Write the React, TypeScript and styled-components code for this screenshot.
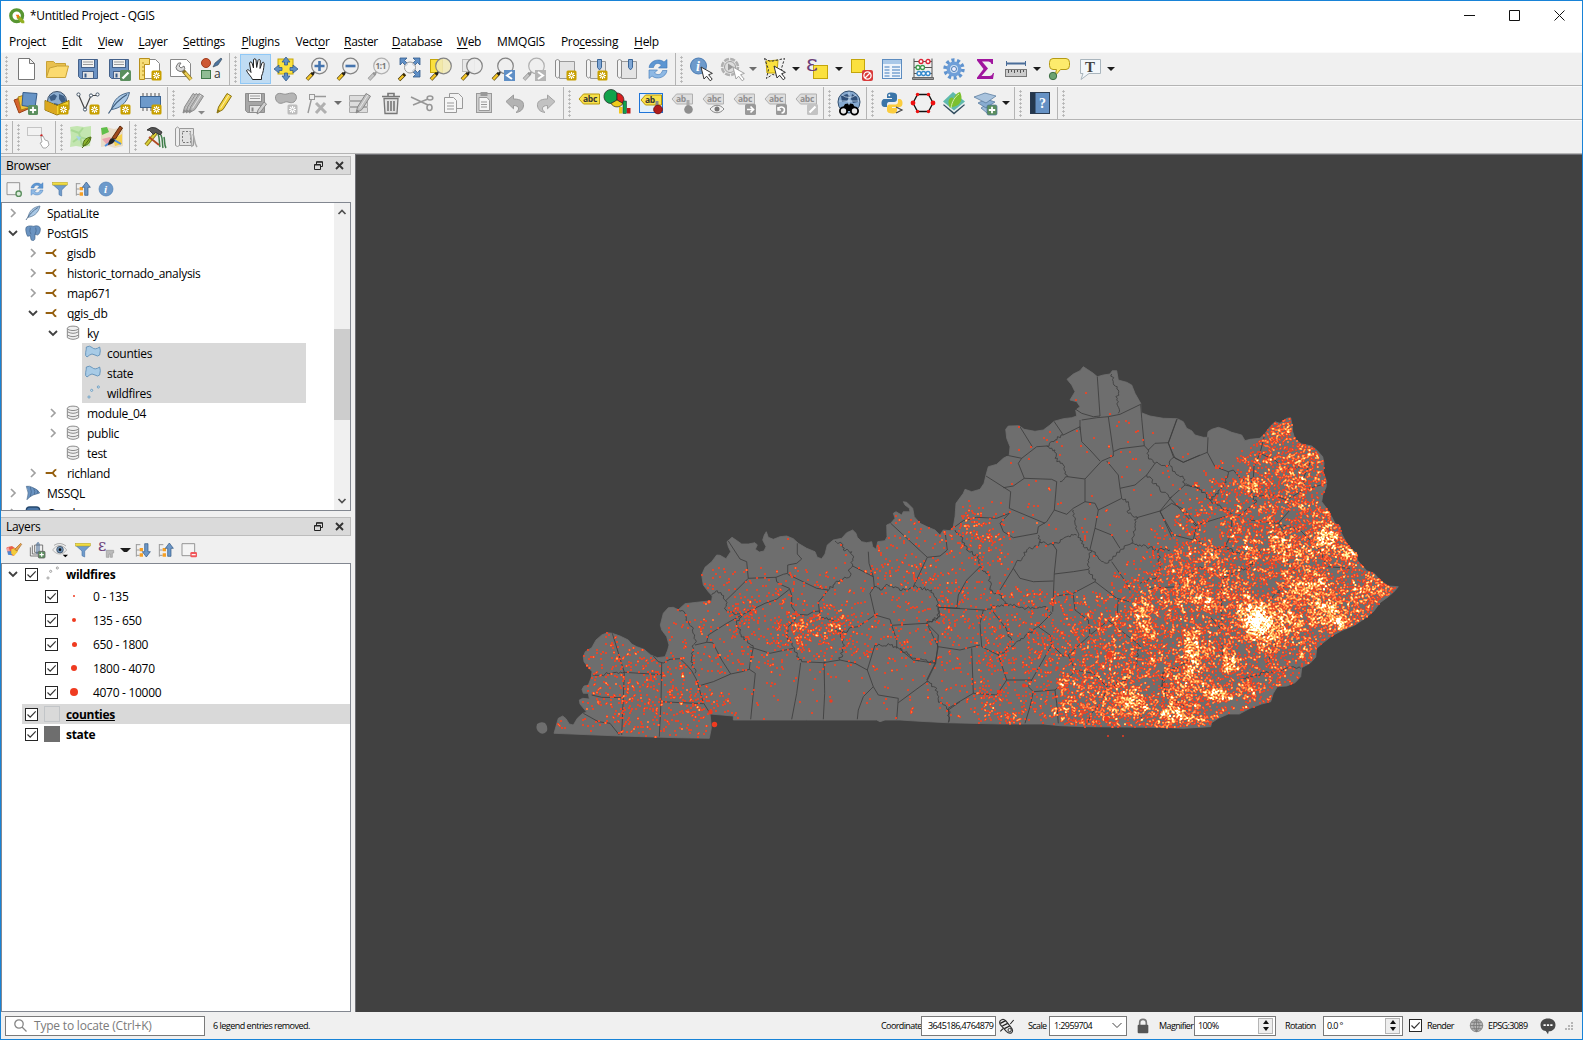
import React from "react";
import type { ReactNode } from "react";
import styled, { createGlobalStyle, css } from "styled-components";

const UI_FONT = '"Open Sans", "Noto Sans", sans-serif';

const GlobalStyle = createGlobalStyle`
  * { box-sizing: border-box; }
  html, body { margin: 0; padding: 0; overflow: hidden; }
  body { font: 12px ${UI_FONT}; color: #000; cursor: default; }
  svg { display: block; flex: none; }
`;

/* ------------------------------------------------------------------ shell */

const Window = styled.div`
  width: 1583px;
  height: 1040px;
  display: flex;
  flex-direction: column;
  background: #f0f0f0;
  border: 1px solid #1883d7;
  letter-spacing: -0.3px;
`;

const TitleBar = styled.header`
  height: 29px;
  flex: none;
  display: flex;
  align-items: center;
  background: #fff;
  padding-left: 8px;
`;

const TitleText = styled.h1`
  flex: 1;
  margin: 0 0 0 5px;
  font-size: 12px;
  font-weight: 400;
`;

const WindowButton = styled.div`
  width: 45px;
  height: 29px;
  display: flex;
  align-items: center;
  justify-content: center;
`;

const MenuBar = styled.nav`
  height: 22px;
  flex: none;
  display: flex;
  align-items: center;
  background: #fff;
`;

const MenuItem = styled.span<{ $w: number }>`
  width: ${(p) => p.$w}px;
  text-align: center;
  white-space: nowrap;
  u { text-underline-offset: 2px; }
`;

const ToolbarRow = styled.div`
  height: 34px;
  flex: none;
  display: flex;
  border-top: 1px solid #fafafa;
  border-bottom: 1px solid #b4b4b4;
`;

const ToolbarGroup = styled.div<{ $last?: boolean }>`
  display: flex;
  align-items: center;
  padding-right: 1px;
  border-right: ${(p) => (p.$last ? 0 : 1)}px solid #b4b4b4;
`;

const Handle = styled.div`
  width: 11px;
  height: 28px;
  flex: none;
  margin-right: -1px;
  background: radial-gradient(circle at 1.5px 1.5px, #b4b4b4 0.9px, transparent 1.4px) 4px 1px / 3px 4px repeat-y;
`;

const ToolButton = styled.div<{ $menu?: boolean; $active?: boolean }>`
  width: ${(p) => (p.$menu ? 43 : 31)}px;
  height: 30px;
  flex: none;
  display: flex;
  align-items: center;
  padding-left: 3px;
  gap: 5px;
  ${(p) =>
    p.$active &&
    css`
      background: #c0dcf3;
      border: 1px solid #90c8f6;
      padding-left: 3px;
    `}
`;

const Caret = styled.i<{ $dim?: boolean }>`
  border: 4px solid transparent;
  border-top-color: ${(p) => (p.$dim ? "#6d6d6d" : "#1c1c1c")};
  border-bottom: 0;
`;

const Workspace = styled.main`
  flex: 1;
  min-height: 0;
  display: flex;
`;

const Docks = styled.aside`
  width: 354px;
  flex: none;
  padding: 2px 4px 0 0;
  display: flex;
  flex-direction: column;
`;

const Dock = styled.section<{ $h?: number }>`
  ${(p) => (p.$h ? `height: ${p.$h}px; flex: none;` : "flex: 1; min-height: 0;")}
  display: flex;
  flex-direction: column;
`;

const DockTitle = styled.div`
  height: 19px;
  flex: none;
  display: flex;
  align-items: center;
  padding: 0 6px 0 5px;
  gap: 12px;
  background: #dadada;
  border: 1px solid #bcbcbc;
  border-left: 0;
  span { flex: 1; }
`;

const DockTools = styled.div`
  height: 27px;
  flex: none;
  display: flex;
  align-items: center;
  padding-left: 5px;
  gap: 7px;
`;

const TreeFrame = styled.div`
  flex: 1;
  min-height: 0;
  display: flex;
  background: #fff;
  border: 1px solid #828790;
`;

const TreeBody = styled.div`
  flex: 1;
  min-width: 0;
  overflow: hidden;
`;

const TreeRow = styled.div<{ $level: number }>`
  height: 20px;
  display: flex;
  align-items: center;
  padding-left: ${(p) => 1 + p.$level * 20}px;
`;

const Expander = styled.div`
  width: 19px;
  flex: none;
  display: flex;
  justify-content: center;
`;

const NodeCell = styled.div<{ $selected?: boolean }>`
  height: 20px;
  width: ${(p) => (p.$selected ? "224px" : "auto")};
  display: flex;
  align-items: center;
  gap: 6px;
  padding-left: 3px;
  white-space: nowrap;
  background: ${(p) => (p.$selected ? "#d9d9d9" : "none")};
`;

const ScrollBar = styled.div`
  width: 16px;
  flex: none;
  display: flex;
  flex-direction: column;
  align-items: center;
  background: #f0f0f0;
  padding: 5px 0;
`;

const ScrollThumb = styled.div`
  width: 16px;
  height: 91px;
  margin: 113px 0 auto;
  background: #cdcdcd;
`;

const LayerRow = styled.div<{ $h: number; $indent: number; $selected?: boolean; $bold?: boolean }>`
  height: ${(p) => p.$h}px;
  margin-left: ${(p) => (p.$indent ? 40 : 20)}px;
  padding-left: 3px;
  display: flex;
  align-items: center;
  background: ${(p) => (p.$selected ? "#d9d9d9" : "none")};
  font-weight: ${(p) => (p.$bold ? 700 : 400)};
  text-decoration: ${(p) => (p.$selected ? "underline" : "none")};
`;

const LayerRoot = styled.div`
  display: flex;
  align-items: center;
  padding-left: 1px;
  height: 20px;
  & > div:last-child { margin-left: 0; flex: 1; }
`;

const CheckBox = styled.div`
  width: 13px;
  height: 13px;
  flex: none;
  border: 1px solid #262626;
  background: #fff;
  display: flex;
  align-items: center;
  justify-content: center;
`;

const Swatch = styled.div<{ $fill: string; $line: string }>`
  width: 16px;
  height: 16px;
  margin: 0 6px;
  background: ${(p) => p.$fill};
  border: 1px solid ${(p) => p.$line};
`;

const SymbolCell = styled.div<{ $w: number; $gap?: number }>`
  width: ${(p) => p.$w}px;
  margin-right: ${(p) => p.$gap ?? 0}px;
  display: flex;
  justify-content: center;
`;

const Dot = styled.i<{ $d: number }>`
  width: ${(p) => p.$d}px;
  height: ${(p) => p.$d}px;
  border-radius: 50%;
  background: #ef3b20;
`;

const MapFrame = styled.section`
  flex: 1;
  background: #414141;
  border-left: 1px solid #6f6f74;
  border-top: 1px solid #6f6f74;
  overflow: hidden;
`;

const StatusBar = styled.footer`
  height: 27px;
  flex: none;
  display: flex;
  align-items: center;
  padding: 0 2px 0 4px;
  font-size: 9px;
  letter-spacing: -0.6px;
  white-space: nowrap;
`;

const Field = styled.div<{ $w: number; $pad?: number }>`
  width: ${(p) => p.$w}px;
  height: 20px;
  flex: none;
  display: flex;
  align-items: center;
  padding: 0 2px 0 ${(p) => p.$pad ?? 3}px;
  background: #fff;
  border: 1px solid #7a7a7a;
  span { flex: 1; }
`;

const Locator = styled(Field)`
  font-size: 12px;
  letter-spacing: -0.2px;
  color: #7b7b7b;
  gap: 7px;
`;

const Message = styled.div`
  flex: 1;
  padding-left: 8px;
  letter-spacing: -0.5px;
`;

const Label = styled.label<{ $w: number }>`
  width: ${(p) => p.$w}px;
  flex: none;
`;

const Spin = styled.div`
  width: 15px;
  height: 16px;
  display: flex;
  flex-direction: column;
  align-items: center;
  justify-content: space-around;
  background: #eee;
  border: 1px solid #b5b5b5;
  i { border: 3px solid transparent; }
  i:first-child { border-bottom: 4px solid #111; border-top: 0; }
  i:last-child { border-top: 4px solid #111; border-bottom: 0; }
`;

const StatusIcon = styled.div<{ $w: number }>`
  width: ${(p) => p.$w}px;
  flex: none;
  display: flex;
  justify-content: center;
`;

/* ------------------------------------------------------------------ icons */

const IconSvg = styled.svg`
  overflow: visible;
`;

const Icon = ({ size = 24, box = 24, children }: { size?: number; box?: number; children: ReactNode }) => (
  <IconSvg width={size} height={size} viewBox={`0 0 ${box} ${box}`} fill="none">
    {children}
  </IconSvg>
);

const GoldBadge = ({ x = 13, y = 13, dim = false }) => (
  <g transform={`translate(${x} ${y})`}>
    <rect x=".5" y=".5" width="10" height="10" rx="1.5" fill={dim ? "#bdbdbd" : "#c8a000"} />
    <path d="M5.5 2v7M2 5.5h7M3 3l5 5M8 3l-5 5" stroke="#fff" strokeWidth="1.1" />
    <circle cx="5.5" cy="5.5" r="1.1" fill={dim ? "#bdbdbd" : "#c8a000"} />
  </g>
);

const GreenBadge = ({ x = 14, y = 14 }) => (
  <g transform={`translate(${x} ${y})`}>
    <rect width="10" height="10" rx="1.5" fill="#5b8f5e" />
    <path d="M5 1.8v6.4M1.8 5h6.4" stroke="#fff" strokeWidth="1.8" />
  </g>
);

const Lens = ({ cx = 14.5, cy = 9, dim = false, fill = "#eee" }) => (
  <g>
    <path d="M2 22.5l6-6.2" stroke={dim ? "#8c8c8c" : "#3b2c00"} strokeWidth="3.6" />
    <path d="M2.2 22.3l4.4-4.6" stroke={dim ? "#c4c4c4" : "#f5c628"} strokeWidth="2.4" />
    <path d="M7 17.5l2.6-2.8" stroke={dim ? "#999" : "#222"} strokeWidth="2.2" />
    <circle cx={cx} cy={cy} r="7.8" fill={fill} fillOpacity=".88" stroke={dim ? "#b0b0b0" : "#848484"} strokeWidth="1.2" />
  </g>
);

const Cursor = ({ x = 12, y = 10, dim = false }) => (
  <path
    transform={`translate(${x} ${y})`}
    d="M0 0l3 12 2.6-2.8 3.6 4.6 2-1.6-3.6-4.5 3.8-1.3z"
    fill="#fff"
    stroke={dim ? "#a4a4a4" : "#333"}
    strokeWidth="1"
  />
);

const Disk = ({ dim = false }) => (
  <g stroke={dim ? "#8e8e8e" : "#44618a"}>
    <path d="M2.5 2.5h19v19h-17l-2-2z" fill={dim ? "#a6a6a6" : "#6d93c4"} />
    <rect x="5.5" y="2.5" width="13" height="8" fill="#f2f2f2" />
    <path d="M7 5h10M7 7.5h10" stroke="#999" />
    <rect x="6.5" y="14.5" width="11" height="7" fill="#e4e4e4" />
    <path d="M8.5 16.5h2v4h-2z" fill={dim ? "#888" : "#345b8c"} stroke="none" />
  </g>
);

const Tag = ({ dim = false, text = "abc", y = 0 }) => (
  <g transform={`translate(0 ${y})`}>
    <path d="M2 8l4.5-5h16v10h-16z" fill={dim ? "#dedede" : "#f8e14b"} stroke={dim ? "#b0b0b0" : "#b8990a"} />
    <text x="6" y="11" fontFamily="Open Sans, sans-serif" fontSize="8.5" fontWeight="700" letterSpacing="-.3" fill={dim ? "#8f8f8f" : "#333"}>
      {text}
    </text>
  </g>
);

const Pencil = ({ a = "#f2d13a", b = "#8a7415", dx = 0 }) => (
  <g transform={`translate(${dx} 0)`}>
    <path d="M5 22l1.5-6L15 2.5l4.5 2.7L11 18.5z" fill={a} stroke={b} />
    <path d="M8.5 17.3L16.8 4" stroke="#fff" strokeOpacity=".6" />
    <path d="M5 22l.9-3.6 2.2 1.4z" fill={b} />
  </g>
);

const Sheet = ({ dim = false }) => (
  <g>
    <path d="M6.5 4.5h15v17h-15z" fill="#e4e4e4" stroke="#9a9a9a" />
    <path d="M2.5 3.5q2-2 4 0v16q-2 3-4 0z" fill="#f4f4f4" stroke={dim ? "#aaa" : "#8b8b8b"} />
  </g>
);

const Bookmark = ({ x = 13 }) => <path transform={`translate(${x} 2)`} d="M.5.5h4v8l-2 2.4-2-2.4z" fill="#7fa6d4" stroke="#3c6797" />;

const Refresh = () => (
  <g>
    <path d="M3 10.5C4 3.5 13 .8 18 5l3-2.500v8.500h-8.500L15.500 8C12 5 8.500 6.500 7.500 10.500z" fill="#5d96d2" stroke="#3c76b5" strokeWidth=".6" />
    <path d="M21 13.500C20 20.500 11 23.200 6 19l-3 2.500V13h8.500L8.500 16c3.500 3 7 1.500 8-2.500z" fill="#8fb9e4" stroke="#3c76b5" strokeWidth=".6" />
  </g>
);

const Globe = () => (
  <g>
    <circle cx="12" cy="10" r="9.500" fill="#8cadcf" stroke="#3d5068" />
    <path d="M4 6l5-3 3 2-2 4-4 1zM14 3l5 2 2 5-4 2-3-4zM9 12l4 1-1 4-3-1z" fill="#3e5f86" />
  </g>
);

const Feather = () => (
  <g>
    <path d="M22.500 1.500C13 3 6.500 8 4.500 18.500 12 17.500 20 13 22.500 1.500z" fill="#a9c8e6" stroke="#4b6b8c" />
    <path d="M1.500 22.500C6 15 12 8 20 3.500" stroke="#3f5d7c" strokeWidth="1.200" />
  </g>
);

const Funnel = () => (
  <g>
    <path d="M1.500 5.500h21l-8 8v9l-4-2v-7z" fill="#6f9ccc" stroke="#4b76a8" />
    <rect x="1" y="2" width="22" height="4" fill="#f0dc44" stroke="#b8a520" strokeWidth=".8" />
  </g>
);

const TreeArrow = ({ down = false }) => (
  <g>
    <path d="M2 3v19M2 4h6M2 12h5M2 20h5" stroke="#999" strokeWidth="1.500" />
    <path d="M7 9h5v5H7zM7 17h5v5H7z" fill="#f7a024" />
    <path
      transform={down ? "matrix(1 0 0 -1 0 24)" : undefined}
      d="M17 1.500l6 8h-3.500v12h-5v-12H11z"
      fill="#6c97c8"
      stroke="#2e5580"
    />
  </g>
);

const MaskPage = (
  <path d="M1.500 2.500h19v18h-19z" stroke="#888" strokeWidth="1.300" fill="#f4f4f4" />
);

const icons: Record<string, ReactNode> = {
  newFile: <path d="M4.500 1.500h11l5 5v16h-16zM15.500 1.500v5h5" fill="#fff" stroke="#777" />,
  open: (
    <g stroke="#c8a237">
      <path d="M1.500 20V4.500h7l2 2h10V10" fill="#e9c04e" />
      <path d="M1.500 20.500l3-9.500 8-2h11l-3 11.500z" fill="#fbda6f" />
    </g>
  ),
  save: <Disk />,
  saveAs: (
    <g>
      <Disk />
      <rect x="13" y="13" width="11" height="11" rx="1.500" fill="#5b8f5e" />
      <path d="M15.500 21.500l6-6" stroke="#fff" strokeWidth="2.400" />
    </g>
  ),
  layout: (
    <g>
      <path d="M6.500 2.500h11l4 4v15h-15z" fill="#fff" stroke="#888" />
      <path d="M1.500 1.500h10v6h-5v15h-5z" fill="#f6dd78" stroke="#b8901c" />
      <path d="M4 6h2M4 10h2M4 14h2M4 18h2" stroke="#b8901c" />
      <GoldBadge />
    </g>
  ),
  layoutManager: (
    <g>
      <path d="M1.500 2.500h16l4 4v13h-20z" fill="#fff" stroke="#888" />
      <path d="M22 22.500l-8-9" stroke="#8c7420" strokeWidth="4" />
      <path d="M22 22.500l-6-7" stroke="#efd155" strokeWidth="2.400" />
      <path d="M8 8q1-3 4-2l-2 3 2 2 3-2q2 3-1 5l-3 .5q-4-1-4-4z" fill="#ddd" stroke="#777" />
    </g>
  ),
  style: (
    <g>
      <circle cx="6" cy="6" r="4.500" fill="#ce5833" stroke="#a03c1c" />
      <path d="M13 10l2-4 6-5 1 1-4 6z" fill="#4d759f" stroke="#345" strokeWidth=".6" />
      <rect x="1.500" y="13.500" width="9" height="8" fill="#8fbc94" stroke="#3f7a4a" />
      <text x="14" y="21" fontFamily="Open Sans, sans-serif" fontSize="12" fill="#333">a</text>
    </g>
  ),
  pan: (
    <path
      d="M8.500 22.500c-1-3-5-6-6-9 1-1.500 3-.5 4.500 2L5.500 6c.5-1.500 2-1.500 2.500 0l1.500 5L9.500 3c.3-1.700 2.200-1.700 2.500 0l.7 7.500L14 3.500c.5-1.500 2.200-1.200 2.300.3L16 11.500l2-5.500c.8-1.300 2.300-.7 2.200.7-.5 5-1 9-2.700 12.500v3.300z"
      fill="#fff"
      stroke="#222"
    />
  ),
  panSelection: (
    <g>
      <rect x="4" y="2" width="15" height="15" fill="#fbe13e" stroke="#c4a60b" />
      <path
        d="M12 0l4 5h-2.500v3h-3V5H8zM12 24l-4-5h2.500v-3h3v3H16zM0 12l5-4v2.500h3v3H5V16zM24 12l-5 4v-2.500h-3v-3h3V8z"
        fill="#5f8fc6"
        stroke="#345c8b"
        strokeWidth=".8"
      />
    </g>
  ),
  zoomIn: (
    <g>
      <Lens />
      <path d="M14.500 4v10M9.500 9h10" stroke="#4474ae" strokeWidth="2.600" />
    </g>
  ),
  zoomOut: (
    <g>
      <Lens />
      <path d="M9.500 9h10" stroke="#4474ae" strokeWidth="2.600" />
    </g>
  ),
  zoomNative: (
    <g>
      <Lens dim />
      <text x="8.500" y="12" fontFamily="Open Sans, sans-serif" fontSize="8" fontWeight="700" fill="#777">1:1</text>
    </g>
  ),
  zoomFull: (
    <g>
      <path d="M2 1h7L6.500 3.500 10 7 8 9 4.500 5.500 2 8zM22 1v7l-2.500-2.500L16 9l-2-2 3.500-3.500L15 1zM22 20h-7l2.500-2.500L14 14l2-2 3.500 3.500L22 13z" fill="#5f8fc6" stroke="#345c8b" strokeWidth=".8" />
      <path d="M1 23l6-6" stroke="#3b2c00" strokeWidth="3.400" />
      <path d="M1.300 22.700l4-4" stroke="#f5c628" strokeWidth="2.200" />
      <circle cx="12" cy="10.500" r="5.500" fill="#f4f4f4" fillOpacity=".8" stroke="#999" />
    </g>
  ),
  zoomSelection: (
    <g>
      <rect x="1.500" y="2.500" width="12" height="13" fill="#fbe13e" stroke="#c4a60b" />
      <Lens fill="#f0e9b8" />
    </g>
  ),
  zoomLayer: (
    <g>
      <rect x="2.500" y="2.500" width="12" height="12" fill="#e8e8e8" stroke="#bbb" />
      <Lens />
    </g>
  ),
  zoomLast: (
    <g>
      <Lens />
      <rect x="13" y="13" width="11" height="11" fill="#5f8fc6" />
      <path d="M21 15l-5 3.500 5 3.500" stroke="#fff" strokeWidth="2" />
    </g>
  ),
  zoomNext: (
    <g>
      <Lens dim />
      <rect x="13" y="13" width="11" height="11" fill="#b5b5b5" />
      <path d="M16 15l5 3.500-5 3.500" stroke="#fff" strokeWidth="2" />
    </g>
  ),
  newView: (
    <g>
      <Sheet />
      <GoldBadge />
    </g>
  ),
  newBookmark: (
    <g>
      <Sheet />
      <Bookmark />
      <GoldBadge />
    </g>
  ),
  bookmarks: (
    <g>
      <Sheet />
      <Bookmark />
    </g>
  ),
  refresh: <Refresh />,
  identify: (
    <g>
      <circle cx="9.500" cy="9" r="8" fill="#6d9acb" stroke="#4c7db5" />
      <text x="7" y="14" fontFamily="Liberation Serif, serif" fontStyle="italic" fontSize="14" fontWeight="700" fill="#fff">i</text>
      <Cursor />
    </g>
  ),
  action: (
    <g>
      <circle cx="10" cy="10" r="8" fill="#e6e6e6" stroke="#b0b0b0" strokeWidth="2.600" strokeDasharray="5 1.280" />
      <circle cx="10" cy="10" r="5.500" fill="#ddd" stroke="#a0a0a0" />
      <path d="M8 6.500l5.500 3.500L8 13.500z" fill="#999" />
      <Cursor dim x={13} />
    </g>
  ),
  select: (
    <g>
      <path d="M3 4l12-1-1 13H4z" fill="#fbe13e" stroke="#c4a60b" />
      <path d="M1.500 1.500l6 3 14-3-3 10 1 8-10-2-6 4 2-9z" stroke="#333" strokeDasharray="2.500 1.500" />
      <Cursor x={11} y={9} />
    </g>
  ),
  selectExpr: (
    <g>
      <rect x="7.500" y="8.500" width="14" height="13" fill="#fbe13e" stroke="#c4a60b" />
      <text x="0" y="14" fontFamily="DejaVu Serif, serif" fontSize="23" fill="#6b3f78">ε</text>
    </g>
  ),
  deselect: (
    <g>
      <rect x="2.500" y="2.500" width="13" height="13" fill="#fbe13e" stroke="#c4a60b" />
      <rect x="13" y="13" width="11" height="11" rx="2" fill="#d93a3a" />
      <circle cx="18.500" cy="18.500" r="3.600" stroke="#fff" strokeWidth="1.300" />
      <path d="M16 21l5-5" stroke="#fff" strokeWidth="1.300" />
    </g>
  ),
  table: (
    <g>
      <rect x="2.500" y="2.500" width="19" height="19" fill="#eef4fb" stroke="#5c8cc0" />
      <rect x="3" y="3" width="18" height="4" fill="#a9c8e8" />
      <path d="M4.500 10h5M4.500 13h5M4.500 16h5M4.500 19h5M12 10h8M12 13h8M12 16h8M12 19h8" stroke="#7aa3d1" strokeWidth="1.300" />
    </g>
  ),
  abacus: (
    <g>
      <path d="M3 1.500v19M21 1.500v19M3 4.500h18M3 10.500h18M3 16.500h18" stroke="#555" />
      <path d="M1.500 20.500h21v2h-21z" fill="#999" stroke="#666" />
      <g strokeWidth="1.300" fill="#fff">
        <circle cx="10" cy="4.500" r="2" stroke="#d23" /><circle cx="17" cy="4.500" r="2" stroke="#d23" />
        <circle cx="7" cy="10.500" r="2" stroke="#3a9a4a" /><circle cx="11.500" cy="10.500" r="2" stroke="#3a9a4a" />
        <circle cx="8" cy="16.500" r="2" stroke="#38c" /><circle cx="12.500" cy="16.500" r="2" stroke="#38c" /><circle cx="17" cy="16.500" r="2" stroke="#38c" />
      </g>
    </g>
  ),
  gear: (
    <g>
      <circle cx="12" cy="12" r="8.700" stroke="#5f93cf" strokeWidth="4" strokeDasharray="3 2.460" />
      <circle cx="12" cy="12" r="5.700" fill="#cfe0f3" stroke="#6f9fd8" strokeWidth="3.500" />
      <circle cx="12" cy="12" r="2.500" fill="#eef" stroke="#4c7db5" />
    </g>
  ),
  sigma: <path d="M4 2h16v5h-1.500q-.5-2.500-3-2.500H9l6 7-6.500 7.500h8q2.500 0 3.500-3H21l-1 6H4v-1.500L10.500 12 4 3.500z" fill="#a0159e" />,
  ruler: (
    <g>
      <path d="M2 6.500h20" stroke="#4a6d99" strokeWidth="2" />
      <path d="M2.500 4v5M21.500 4v5" stroke="#4a6d99" />
      <rect x="1.500" y="12.500" width="21" height="7" fill="#ccc" stroke="#777" />
      <path d="M4.500 13v3M7.500 13v2M10.500 13v3M13.500 13v2M16.500 13v3M19.500 13v2" stroke="#555" />
    </g>
  ),
  mapTip: (
    <g>
      <path d="M6 1.500h13q3.500 0 3.500 4v3q0 4-3.500 4h-5.500L8 19l1.500-6.500H6q-3.500 0-3.500-4v-3q0-4 3.500-4z" fill="#fdeb6c" stroke="#b59b16" />
      <circle cx="6" cy="19" r="3.700" fill="#6ba271" stroke="#3f6f46" />
    </g>
  ),
  annotation: (
    <g>
      <path d="M2.500 2.500h20v14H11L3 22.500l2-6H2.500z" fill="#f3f7fa" stroke="#a9b5bd" />
      <text x="7" y="14.500" fontFamily="Liberation Serif, serif" fontSize="15" fontWeight="700" fill="#444">T</text>
    </g>
  ),
  dataSource: (
    <g>
      <path d="M0 9l9-3 5 12-9 4z" fill="#d6642c" stroke="#9b3f14" />
      <path d="M4 6l10-3 3 13-10 3z" fill="#f2c43a" stroke="#a5811b" />
      <path d="M9 1.500l14 1-2 14-13-2z" fill="#6794c6" stroke="#365d8a" />
      <GreenBadge />
    </g>
  ),
  newGeo: (
    <g>
      <Globe />
      <path d="M0 9.500l12 5 12-5v9L12 24 0 19z" fill="#f3d331" stroke="#8f6f0a" />
      <path d="M.5 10l11.500 5v8.500L.5 19z" fill="#dba71f" />
      <GoldBadge />
    </g>
  ),
  newShape: (
    <g>
      <path d="M2.500 3.500l6.500 15 6-14h6.500" stroke="#444" strokeWidth="1.200" />
      <g fill="#fff" stroke="#456"><circle cx="2.500" cy="3.500" r="1.600" /><circle cx="9" cy="18.500" r="1.600" /><circle cx="15" cy="4.500" r="1.600" /><circle cx="21.500" cy="3.500" r="1.600" /></g>
      <GoldBadge />
    </g>
  ),
  newSpatialite: (
    <g>
      <Feather />
      <GoldBadge />
    </g>
  ),
  newMemory: (
    <g>
      <path d="M5 2v18M9 2v18M13 2v18M17 2v18M21 2v18" stroke="#555" />
      <rect x="2.500" y="5.500" width="20" height="11" fill="#6d9acb" stroke="#3d6593" />
      <GoldBadge />
    </g>
  ),
  edits: (
    <g>
      <Pencil a="#b8b8b8" b="#8d8d8d" dx={-3} />
      <Pencil a="#bdbdbd" b="#8d8d8d" dx={0} />
      <Pencil a="#b3b3b3" b="#8d8d8d" dx={3} />
      <path d="M17 20h7l-3.500 3.500z" fill="#888" />
    </g>
  ),
  edit: <Pencil />,
  saveEdits: (
    <g>
      <Disk dim />
      <path d="M14 23l1-4 6-8 2.500 2-6 8z" fill="#d0d0d0" stroke="#888" />
    </g>
  ),
  addPolygon: (
    <g>
      <path d="M2 9c-2-5 2-8 7-6 3 1 5-1 9-1 5 0 6 6 2 9-4 2-6-1-9 0-4 2-7 2-9-2z" fill="#b5b5b5" stroke="#939393" />
      <GoldBadge dim />
    </g>
  ),
  vertex: (
    <g stroke="#999">
      <path d="M3 22L7 5.500h14" strokeWidth="1.400" />
      <rect x="4.500" y="3.500" width="5" height="5" fill="#eee" />
      <path d="M11 22l9-10M11 12l10 10" strokeWidth="3" stroke="#b0b0b0" />
    </g>
  ),
  modify: (
    <g>
      <path d="M1.500 4.500h18v5h-18zM1.500 10.500h18v5h-18zM1.500 16.500h18v5h-18z" fill="#ddd" stroke="#aaa" />
      <Pencil a="#c0c0c0" b="#888" dx={3} />
    </g>
  ),
  trash: (
    <g stroke="#777" strokeWidth="1.300">
      <path d="M5 7.500h14l-1 15H6z" fill="#e2e2e2" />
      <path d="M3 5.500h18M9 5V2.500h6V5M9 10v10M12 10v10M15 10v10" strokeWidth="1.600" />
    </g>
  ),
  cut: (
    <g stroke="#979797" strokeWidth="1.600">
      <path d="M1 6l17 8M3 14l15-6" />
      <ellipse cx="20" cy="7" rx="2.800" ry="2" />
      <ellipse cx="19.500" cy="16.500" rx="2.500" ry="3" />
    </g>
  ),
  copy: (
    <g stroke="#999">
      <path d="M8.500 2.500h9l4 4v11h-13z" fill="#f2f2f2" />
      <path d="M3.500 6.500h9l3 3v12h-12z" fill="#f6f6f6" />
      <path d="M6 12h7M6 15h7M6 18h7" />
    </g>
  ),
  paste: (
    <g stroke="#999">
      <rect x="4.500" y="2.500" width="15" height="19" fill="#cfcfcf" />
      <rect x="9" y="1.500" width="6" height="3" fill="#999" />
      <path d="M7 6.500h8l2.500 3v10H7z" fill="#f6f6f6" />
      <path d="M9 11h6M9 13.500h6M9 16h6" />
    </g>
  ),
  undo: <path d="M3 10.500L10.500 4v4c8 0 10.500 3 10 7S17 21 13 21.500c4-3 3.500-7-2.500-7v3.300z" fill="#b3b3b3" stroke="#9b9b9b" />,
  redo: <path transform="matrix(-1 0 0 1 24 0)" d="M3 10.500L10.500 4v4c8 0 10.500 3 10 7S17 21 13 21.500c4-3 3.500-7-2.500-7v3.300z" fill="#c2c2c2" stroke="#a3a3a3" />,
  label: <Tag />,
  diagram: (
    <g>
      <path d="M9 9L9 2a7 7 0 1 0-6 10.500z" fill="#12a24b" stroke="#222" strokeWidth=".7" />
      <path d="M9 9V2a7 7 0 0 1 6 10.500z" fill="#d81f1f" stroke="#222" strokeWidth=".7" />
      <path d="M9 9l6 3.500a7 7 0 0 1-12 0z" fill="#f0cc1a" stroke="#222" strokeWidth=".7" />
      <rect x="11" y="16" width="3.500" height="6.500" fill="#f2c81a" />
      <rect x="15" y="10" width="3.500" height="12.500" fill="#12a24b" stroke="#123" strokeWidth=".5" />
      <rect x="19" y="17" width="3.500" height="5.500" fill="#c01818" />
    </g>
  ),
  pinned: (
    <g>
      <rect x=".5" y="2.500" width="23" height="19" fill="#e3f0fb" stroke="#1e74d8" />
      <Tag text="ab" y={1} />
      <path d="M18 10v7" stroke="#888" strokeWidth="3" />
      <circle cx="19" cy="18.500" r="4.300" fill="#b01c1c" stroke="#7d1010" />
    </g>
  ),
  pin: (
    <g>
      <Tag dim text="ab" />
      <path d="M18 9v7" stroke="#aaa" strokeWidth="3" />
      <circle cx="18.500" cy="18.500" r="4.300" fill="#8e8e8e" />
    </g>
  ),
  showLabel: (
    <g>
      <Tag dim />
      <path d="M9 18c4-5 10-5 14 0-4 5-10 5-14 0z" fill="#f2f2f2" stroke="#888" />
      <circle cx="16" cy="18" r="2.500" fill="#777" />
    </g>
  ),
  moveLabel: (
    <g>
      <Tag dim />
      <rect x="13" y="13" width="11" height="11" rx="1.500" fill="#999" />
      <path d="M15 18.500h6M18.500 15.500l3 3-3 3" stroke="#fff" strokeWidth="1.700" />
    </g>
  ),
  rotateLabel: (
    <g>
      <Tag dim />
      <rect x="13" y="13" width="11" height="11" rx="1.500" fill="#999" />
      <path d="M18.500 22a3 3 0 1 0-3-3.500M15 16v3h3" stroke="#fff" strokeWidth="1.500" />
    </g>
  ),
  changeLabel: (
    <g>
      <Tag dim />
      <rect x="13" y="13" width="11" height="11" rx="1.500" fill="#c3c3c3" />
      <path d="M15.500 21.500l6-6" stroke="#fff" strokeWidth="2.200" />
    </g>
  ),
  metasearch: (
    <g>
      <circle cx="12" cy="11" r="11" fill="#86a9cf" stroke="#34506e" />
      <path d="M4 5l6-2 3 2-3 5-5 1zM15 3l5 3 1 5-5 1-2-4z" fill="#2f4f78" />
      <path d="M2 10h20M12 1v20M5 4q7 5 14 0" stroke="#d3e2f0" strokeWidth=".7" />
      <path d="M4 20l4-7 3-.5 1 2 1-2 3 .5 4 7z" fill="#000" />
      <circle cx="6.500" cy="20" r="3.600" fill="#e8e8e8" stroke="#000" strokeWidth="1.800" />
      <circle cx="17.500" cy="20" r="3.600" fill="#e8e8e8" stroke="#000" strokeWidth="1.800" />
    </g>
  ),
  python: (
    <g>
      <path d="M11.500 1.500c-4 0-4.500 1.500-4.500 3V7h5v1H4.500C2 8 1.500 10.500 1.500 12.500S2.500 16 4.500 16H7v-2.500C7 11.500 8 11 10 11h4c2 0 3-1 3-3V4.500c0-2-2-3-5.500-3z" fill="#3b75a8" />
      <circle cx="9.300" cy="4.300" r="1" fill="#fff" />
      <path d="M12.500 22.500c4 0 4.500-1.500 4.500-3V17h-5v-1h7.500c2.500 0 3-2 3-4s-1-4-3-4H18v3c0 2-1.500 2.500-3.500 2.500h-4C8.500 13.500 7 14 7 16.500v3c0 2 2 3 5.500 3z" fill="#fbcd3f" />
      <path d="M16 16l6 3-6 3" stroke="#444" strokeWidth="1.200" />
    </g>
  ),
  hexagon: (
    <g>
      <path d="M6.500 3.500h11L22 12l-4.500 8.500h-11L2 12z" stroke="#111" strokeWidth="1.300" />
      <g fill="#e11"><circle cx="6.500" cy="3.500" r="1.700" /><circle cx="17.500" cy="3.500" r="1.700" /><circle cx="22" cy="12" r="2.400" /><circle cx="17.500" cy="20.500" r="1.700" /><circle cx="6.500" cy="20.500" r="1.700" /><circle cx="2" cy="12" r="2.400" /></g>
    </g>
  ),
  leaf: (
    <g>
      <path d="M1 14l11-9 11 9-11 9.500z" fill="#2f4a5c" />
      <path d="M1 12.500L12 4l11 8.500L12 21.500z" fill="#e7eef0" />
      <path d="M1 10.500L11 1l12 9.500-11 9z" fill="#5fb9ad" />
      <path d="M8 17C4 9 9 4 12 8c0-3 3-6 6-7 3 6 2 13-7 15z" fill="#7cc02f" />
      <path d="M9 17C10 10 13 6 17 3" stroke="#d6eeb0" />
    </g>
  ),
  addLayers: (
    <g stroke="#4f7398" strokeWidth=".7">
      <path d="M8 17l6-4 8 3-8 6z" fill="#9dbbd8" />
      <path d="M5 12l8-4 9 3-9 6z" fill="#88acd0" />
      <path d="M1 6l11-4 11 3-10 7z" fill="#a9c3dd" />
      <GreenBadge />
    </g>
  ),
  help: (
    <g>
      <rect x="2.500" y="1.500" width="19" height="21" fill="#6591c4" stroke="#2c3d52" />
      <rect x="2.500" y="1.500" width="5" height="21" fill="#24374d" />
      <text x="11" y="17" fontFamily="Liberation Serif, serif" fontSize="14" fontWeight="700" fill="#fff">?</text>
    </g>
  ),
  pointer: (
    <g>
      <rect x="1.500" y="2.500" width="14" height="8" stroke="#c4c4c4" fill="#f2f2f2" />
      <circle cx="15.500" cy="10.500" r="1.200" fill="#c22" />
      <path d="M15 12l2-1 2 4 3 1 1 4-3 3h-3l-3-5 2-1z" fill="#fff" stroke="#aaa" />
    </g>
  ),
  osmGreen: (
    <g>
      <path d="M1 2l7-1 7 1 7-1v8l-1 12-8 1-6-1-6 1 1-10z" fill="#c3e6b0" />
      <path d="M2 5l8 3 4-5M4 17l7-5 9 3M10 8l3 12" stroke="#a9d995" strokeWidth="2" />
      <path d="M7 11l5 1-2 4z" fill="#a5d3e6" />
      <path d="M14 21c0-5 2-8 8-9-1 6-3 8-8 9z" fill="#8bb52e" stroke="#4b6a12" />
      <path d="M13 23q4-4 8-10" stroke="#4b6a12" />
    </g>
  ),
  osmEdit: (
    <g>
      <path d="M1 3l5-1 8 2 9-2v19l-8 2-7-2-7 1z" fill="#e8dcc8" />
      <path d="M1 3l6-1 2 5-7 3z" fill="#5fbf4a" />
      <path d="M2 14l8-2 4 5-6 4z" fill="#e9a3ae" />
      <path d="M13 14l9-5v10l-7 2z" fill="#f5d04a" />
      <path d="M5 21l9-6 7 4" stroke="#4d8fe0" strokeWidth="2" />
      <path d="M12 13l8-12 2.500 2-7 11z" fill="#a04a1c" stroke="#5b2a0c" />
      <path d="M8 20q1-6 4-7l3 2q-1 4-7 5z" fill="#222" />
    </g>
  ),
  hammer: (
    <g>
      <path d="M15 9c2 4 1 9 2 13M18 10c2 4 1 8 2 13M21 12c1 4 0 8 2 11" stroke="#3f7d49" strokeWidth="1.500" />
      <path d="M3 20L13 8" stroke="#8a7415" strokeWidth="4" />
      <path d="M3 20L13 8" stroke="#d8cf3a" strokeWidth="2" />
      <path d="M4 5q4-4 9-2l6 4-1.500 3-5-2.500-2 2-4-4z" fill="#555" stroke="#222" strokeWidth=".8" />
      <path d="M6 12l10 8" stroke="#b14a24" strokeWidth="1.800" />
    </g>
  ),
  scroll: (
    <g>
      <path d="M5.500 3.500h14v17h-14z" fill="#e3e3e3" stroke="#999" />
      <path d="M1.500 3.500q2-3 4 0v17q-2 2-4 0z" fill="#eee" stroke="#999" />
      <path d="M8.500 6.500h8v11h-8z" stroke="#777" strokeDasharray="2 1.500" />
      <path d="M16 8c2 5 1 9 2 14M19 9c2 5 1 9 4 13" stroke="#aaa" strokeWidth="1.600" />
    </g>
  ),
  addSelected: (
    <g>
      {MaskPage}
      <circle cx="19" cy="19" r="4" fill="#dcebdc" stroke="#5b8f5e" strokeWidth="2" />
    </g>
  ),
  filter: <Funnel />,
  collapse: <TreeArrow />,
  expand: <TreeArrow down />,
  info: (
    <g>
      <circle cx="12" cy="12" r="10.500" fill="#6d9acb" stroke="#4c7db5" />
      <text x="9" y="18" fontFamily="Liberation Serif, serif" fontStyle="italic" fontSize="17" fontWeight="700" fill="#fff">i</text>
    </g>
  ),
  brush: (
    <g>
      <path d="M1 8l8-2 6 4 2 5-6 6-8-4z" fill="#e8604a" />
      <path d="M0 9l4-1 2 6-4 1z" fill="#f0a0a0" />
      <path d="M2 14l6 0 1 6-6-1z" fill="#4d86d0" />
      <path d="M8 11l6-2 4 5-6 7-4-4z" fill="#f3cc3c" />
      <path d="M13 11l9-9 1.500 1.500-7 10z" fill="#e6a24a" stroke="#a0682a" />
    </g>
  ),
  addGroup: (
    <g stroke="#666" strokeWidth="1.300">
      <path d="M2 8v13h13M5 5v13h13" />
      <path d="M8.500 4.500h12v11h-12z" fill="#eee" />
      <path d="M12 18V2q2-2 3 0v14" stroke="#3e6590" strokeWidth="1.500" />
      <GreenBadge />
    </g>
  ),
  eye: (
    <g>
      <path d="M1 12c6-9 15-9 21 0-6 8-15 8-21 0z" fill="#eee" stroke="#999" />
      <circle cx="12" cy="11.500" r="5" fill="#6d8fb3" stroke="#345" />
      <circle cx="12" cy="11.500" r="2" fill="#111" />
      <path d="M3 5q9-6 18 1" stroke="#aaa" strokeWidth="1.500" />
      <path d="M16 19h8l-4 4z" fill="#000" />
    </g>
  ),
  filterExpr: (
    <g>
      <text x="0" y="14" fontFamily="DejaVu Serif, serif" fontSize="24" fill="#6b3f78">ε</text>
      <path d="M12.500 12.500h11v4h-2v6.500h-3v-5h-2v5h-4z" fill="#bbb" stroke="#999" />
    </g>
  ),
  remove: (
    <g>
      {MaskPage}
      <rect x="14" y="15" width="10" height="8" rx="2" fill="#f0565a" />
      <path d="M16 19h6" stroke="#fff" strokeWidth="1.800" />
    </g>
  ),
};

const nodeIcons: Record<string, ReactNode> = {
  spatialite: <Feather />,
  postgis: (
    <g>
      <path d="M2 3c5-3 9-1 11-1 5-2 10 0 10 4 0 5-2 8-4 9l-4-1v5c0 5-4 5-6 3l-1-6-4 1C2 14 0 6 2 3z" fill="#6a93c1" stroke="#3f6288" />
      <path d="M8 4q-2 6 1 10M16 4q2 5-1 10" stroke="#3f6288" />
    </g>
  ),
  conn: <path d="M1 12h10c2 0 2-5 6-5M11 12c2 0 2 5 6 5" stroke="#96600f" strokeWidth="2.800" />,
  schema: (
    <g stroke="#8b8b8b" strokeWidth="1.500" fill="#efefef">
      <path d="M3.500 5v14q8.500 5 17 0V5" />
      <ellipse cx="12" cy="5" rx="8.500" ry="3.300" />
      <path d="M3.500 10q8.500 5 17 0M3.500 15q8.500 5 17 0" fill="none" />
    </g>
  ),
  polygon: <path d="M2 3q5-3 9 1t11-1q2 5 0 12-3 3-7 0-5-3-8 0l-4 3q-3-1-2-7 1-4 1-8z" fill="#a8cbe6" stroke="#5588b3" strokeWidth="1.200" />,
  points: (
    <g stroke="#6b9ec2" strokeWidth="1.500" fill="#dfeefa">
      <circle cx="20" cy="3" r="1.600" /><circle cx="10" cy="8" r="1.600" /><circle cx="6" cy="18" r="1.600" />
    </g>
  ),
  mssql: <path d="M2 2q5-1 10 2 8 3 10 8l-10 3q-6 3-9 7 4-10-1-20zM8 3q3 7 0 14M13 5q3 5 1 9M18 8q2 3 0 5" fill="#6a93c1" stroke="#3f6288" />,
  oracle: <rect x="2" y="3" width="20" height="16" rx="5" fill="#4b76a8" stroke="#27496e" strokeWidth="2" />,
};

/* -------------------------------------------------------------------- map */

type Pt = [number, number];

const random = (seed: number) => () => {
  seed = (seed + 0x6d2b79f5) | 0;
  let t = Math.imul(seed ^ (seed >>> 15), 1 | seed);
  t = (t + Math.imul(t ^ (t >>> 7), 61 | t)) ^ t;
  return ((t ^ (t >>> 14)) >>> 0) / 4294967296;
};

// Digitised at three units per map pixel, relative to a sheet origin.
const trace = (ox: number, oy: number, text: string): Pt[] =>
  text.trim().split(/\s+/).map((pair) => {
    const [x, y] = pair.split(",").map(Number);
    return [ox + x / 3, oy + y / 3];
  });

const outline: Pt[] = [
  ...trace(520, 480, `102,760 115,715 128,708 138,716 148,732 160,735 172,715 188,700 200,697 193,688 180,672 178,660 188,655 208,657
    205,640 190,640 186,628 192,618 205,615 214,592 216,575 203,560 192,545 190,530 196,515 215,503 228,480 245,465 262,458 277,460
    300,468 325,480 335,492 350,500 372,508 392,525 412,533 435,530 443,510 447,495 440,470 425,450 421,435 430,400 445,383 460,382
    475,389 495,371 530,367 575,362 577,348 565,335 550,315 545,285 555,262 575,245 590,225 600,226 618,236 632,215 625,200 621,185
    636,172 648,180 665,192 685,192 705,188 712,195 706,208 718,216 732,213 738,200 728,180 733,165 739,155 745,172 760,178 780,170
    800,168 820,176 835,190 860,205 885,215 892,232 905,236 915,222 922,195 940,180 965,175 980,158 998,150 1008,160 1012,172
    1025,185 1040,188 1055,185 1058,200 1068,208 1073,185 1095,182 1101,170 1100,135 1112,130 1125,115 1120,100 1128,95 1145,105
    1150,95 1170,95 1168,85 1155,75 1150,65 1160,67 1178,85 1183,110 1200,130 1225,142 1245,150 1260,165 1270,150 1290,152 1300,140`),
  ...trace(900, 350, `165,500 168,460 190,430 195,418 215,425 240,418 252,400 258,375 265,350 290,343 310,325 328,315 330,290 320,265
    317,238 325,228 358,227 372,238 405,244 430,240 450,225 462,214 490,206 515,203 530,198 527,180 540,170 530,155 510,150 525,125
    515,105 501,88 520,72 540,62 550,50 562,58 580,70 592,80 610,75 630,72 637,62 650,62 655,90 680,97 695,105 705,130 722,160
    724,188 750,198 790,205`),
  ...trace(1150, 400, `82,56 100,65 110,85 125,92 135,105 160,112 172,112 174,95 185,88 205,82 225,88 245,97 275,105 285,122 300,118
    330,115 345,100 360,80 375,65 390,70 410,55 422,53 426,75 428,95 435,118 455,132 485,138 500,150 518,170 522,190 520,215
    530,245 528,262 518,285 515,305 530,325 545,350 555,370 570,378 572,395 585,420 600,445 620,460 622,480 635,495 650,512
    672,520 690,540 715,558 745,560 735,572 715,590 690,608 670,635 645,655 615,675 575,692 545,708 520,728 500,745 497,772
    480,790 455,803 452,830 435,848 410,858 382,860 370,880 362,905 335,912 300,925 268,942 235,942 205,955 185,968 182,980
    130,983 100,985 60,983 0,982`),
  ...trace(900, 350, "560,1130 480,1127 430,1122 300,1122 140,1118 60,1114 0,1110"),
  ...trace(520, 480, "1095,720 1080,725 1070,720 860,720 640,720 640,708 570,702 572,720 574,745 568,775 470,773 300,768"),
];

// Lines that start with "~" follow rivers and ridges and are roughened.
const westLines = `277,460 313,577
~218,585 235,586 265,581 290,577 313,577
313,577 425,584
313,577 310,655 305,765
425,549 423,665 418,770
215,645 245,652 310,653
190,700 235,725 270,730 298,765
423,665 550,671
400,528 415,545 430,549 450,538 480,536 500,555 515,572 530,600 550,668 570,700
~475,389 495,400 500,425 520,445 523,470 525,490 517,510 515,540 525,580
525,495 560,487 578,488 605,540 632,582
535,618 580,605 632,582 665,575 688,568
560,487 565,465 620,430 665,405 735,370 770,358 808,328
688,568 690,550 700,503
~700,503 660,460 650,430 665,405
~575,345 592,332 605,345 617,362 618,390 640,398 665,405
617,362 650,330 685,295
625,183 660,237 680,245 685,295
685,295 768,292 790,283 803,280 803,255 830,250 845,237 832,222 832,190
768,292 770,305 785,315 808,325 815,345 815,380 832,403 862,405 880,395 898,393
803,283 890,325 925,330
~925,330 960,300 990,290 985,270 998,258 995,215 970,210 965,190 945,183
925,330 895,367 900,410
~900,410 935,420 960,460 970,480 967,510 960,540
998,258 1060,290 1063,320 1050,340 1065,405 1015,440
~1015,440 985,450 960,460
1045,215 1047,250 1060,290
~832,403 805,440 800,465 820,500 830,530 845,545
688,500 750,520 820,505
845,545 910,548 960,540 1005,550 1042,570
688,568 706,580 700,640 692,718
842,548 830,640 815,718
912,545 914,640 910,718
1042,570 1060,620 1030,650 1015,690 1012,718
1060,620 1075,645 1135,655 1130,718
1042,570 1065,495
~1065,495 1110,495 1130,505
1130,505 1130,480 1115,436 1110,418 1065,405
1115,436 1220,430 1255,465 1252,508 1247,550 1180,540 1130,500
~1063,320 1080,330 1100,312 1145,332 1180,320 1235,330 1255,382 1255,410 1220,430
1112,130 1222,232 1180,320
1275,152 1282,210 1260,228 1222,232
1255,382 1320,385
1247,550 1220,605 1135,668
~1220,605 1250,625 1255,660 1285,690 1285,728
1285,690 1320,665`;

const centralLines = `~165,540 185,560 200,600 235,618 240,650
240,650 200,690 175,735 170,775
165,530 190,512 230,502 290,505 328,490
258,378 332,425 328,475 435,520
328,490 300,520 310,545 340,563 412,550 415,530 440,515 463,480 470,395 455,388 373,385
310,413 340,408 373,385 355,340 365,325 410,290 440,288
317,315 365,325
358,227 397,290
~440,288 465,270 490,255
490,255 540,230
462,214 490,255
~440,288 465,300 465,325 490,345 503,380 480,395
503,380 555,387 605,333 640,318 640,305 625,200
540,230 545,275 570,300 600,333
540,210 540,240
527,178 545,190 580,200 600,198 592,80
545,210 590,203 625,200 660,193 722,163
~635,72 640,100 655,120 650,150 655,190
722,163 725,205 733,287 660,296 640,305
733,287 745,300 765,280 805,278 830,208
805,278 820,320 850,337 900,315
~745,300 745,320 765,340 805,347 822,322
765,340 740,375
~740,375 780,420 810,445
~855,405 850,385 825,365 810,347
810,445 855,405
740,375 705,405 660,415 655,375 620,333
660,415 665,445 595,480 585,460 555,455 555,388
555,455 520,475 500,493 463,480
~520,480 530,540 550,590 570,600
595,480 585,535 570,598
585,535 635,555 660,595
~665,445 685,455 685,490 710,500 700,545 695,580 660,600 620,640 570,600
710,503 780,483 815,440
780,483 815,560
~695,580 740,590 775,600 810,600
~775,600 780,640 770,680 720,700
810,445 880,520 900,540
855,405 900,415
~415,555 425,578 460,585 500,560 530,555
460,585 470,600 463,670 458,785
~425,578 380,600 340,655
340,655 300,720
340,655 360,685 400,695 460,693
463,672 520,665 565,658
~565,658 572,600
~565,658 585,695
585,695 520,730 470,738
585,695 650,745 690,755
635,635 680,700 690,720
~240,650 270,680 270,720 300,735 315,762
~315,762 250,780
250,780 115,772
~315,762 380,775 430,770 455,790
~415,830 350,875 295,915
295,915 245,890 240,820 250,780
455,790 415,830
275,780 310,825
~310,825 335,870
520,735 525,780 565,810 570,855 625,812 718,885
~718,885 705,950 680,990 620,1010
620,1010 580,970 525,960 505,915 570,855
415,830 450,855 455,885 490,918 505,915
455,885 395,990 320,990 295,915
395,990 385,1010 400,1025 465,1020 525,965
400,1025 390,1070 375,1120
465,1020 470,1060 475,1120
620,1010 610,1050 575,1090 560,1125
~115,772 120,800 80,820
80,820 115,890 105,940
~105,940 40,925 0,895
115,890 180,900 240,885
215,895 220,1030 145,1075 148,1115
105,940 80,990
220,1030 290,1035 320,990
655,750 650,810
~790,965 790,1000 800,1040 870,1080
700,1070 730,1110`;

const eastLines = `82,56 55,130 75,175 100,187 172,157 174,112
172,157 195,200 235,215
~235,215 215,270 180,300
235,215 250,210 275,240 310,235 312,200 330,160 345,100
330,160 375,180 400,205 435,205 480,190
~108,250 155,270 180,300 245,345
245,345 205,355 140,375 105,330 65,310
65,310 30,335 70,405 130,420 140,375
245,355 245,400 225,440 185,450 135,415
~310,235 300,290 320,305
320,305 250,360
300,290 370,285 410,300 460,270 530,250
480,190 460,235 465,270
410,300 420,330 385,370 300,360
385,370 400,390 410,440 415,495 440,495
400,375 450,390 510,450 530,500 600,505
~225,440 260,460 330,450 300,500 240,520 215,540
215,540 215,640 215,690
0,565 80,560 150,500 215,530
~440,495 400,560 360,600 355,650 380,740 350,790
215,690 180,650
~280,835 360,815 430,800 452,805
215,730 218,770 240,790
40,820 35,860 80,915
~150,750 90,800 40,820`;

const jitter = random(11);
const roughen = (pts: Pt[]): Pt[] => {
  const out: Pt[] = [pts[0]];
  for (let i = 1; i < pts.length; i++) {
    const [ax, ay] = pts[i - 1];
    const [bx, by] = pts[i];
    const len = Math.hypot(bx - ax, by - ay);
    const steps = Math.max(1, Math.round(len / 1.8));
    for (let k = 1; k < steps; k++) {
      const o = (jitter() - 0.5) * 3.4;
      out.push([ax + ((bx - ax) * k) / steps - ((by - ay) / len) * o, ay + ((by - ay) * k) / steps + ((bx - ax) / len) * o]);
    }
    out.push([bx, by]);
  }
  return out;
};

const toPath = (pts: Pt[]) => "M" + pts.map(([x, y]) => `${x.toFixed(1)} ${y.toFixed(1)}`).join("L");

const linePath = ([[520, 480, westLines], [900, 350, centralLines], [1150, 400, eastLines]] as [number, number, string][])
  .flatMap(([ox, oy, text]) =>
    text.split("\n").map((line) => {
      const pts = trace(ox, oy, line.replace("~", ""));
      return toPath(line.startsWith("~") ? roughen(pts) : pts);
    }),
  )
  .join("");

const inside = (x: number, y: number) => {
  let hit = false;
  for (let i = 0, j = outline.length - 1; i < outline.length; j = i++) {
    const [xi, yi] = outline[i];
    const [xj, yj] = outline[j];
    if (yi > y !== yj > y && x < ((xj - xi) * (y - yi)) / (yj - yi) + xi) hit = !hit;
  }
  return hit;
};

// x, y, spread x, spread y, number of fires
const hotspots = [
  [640, 697, 38, 24, 300], [632, 655, 14, 12, 40], [700, 705, 14, 12, 80], [820, 630, 22, 12, 190], [840, 624, 8, 7, 60],
  [800, 628, 7, 7, 50], [773, 633, 24, 20, 110], [742, 612, 10, 8, 30], [907, 573, 18, 9, 50], [970, 523, 7, 5, 45],
  [984, 536, 10, 8, 60], [990, 703, 8, 9, 60], [1010, 718, 8, 5, 45], [1063, 683, 3, 4, 60], [1055, 712, 2, 3, 25],
  [1143, 618, 6, 13, 260], [1130, 703, 8, 7, 270], [1172, 714, 10, 6, 330], [1193, 650, 6, 15, 420], [1197, 598, 15, 8, 330],
  [1177, 563, 14, 12, 150], [1210, 553, 5, 4, 50], [1187, 683, 10, 15, 330], [1217, 693, 7, 4, 190], [1258, 622, 9, 10, 900],
  [1270, 632, 18, 12, 380], [1240, 608, 12, 8, 200], [1285, 614, 18, 12, 380], [1294, 584, 10, 9, 260], [1320, 592, 11, 12, 400],
  [1328, 612, 10, 8, 180], [1340, 622, 9, 5, 260], [1326, 536, 7, 9, 330], [1350, 554, 6, 6, 180], [1330, 550, 14, 8, 120],
  [1278, 547, 8, 9, 220], [1302, 546, 10, 9, 170], [1250, 558, 4, 6, 70], [1282, 425, 7, 4, 60], [1282, 436, 11, 9, 130],
  [1303, 457, 11, 9, 170], [1253, 487, 10, 5, 150], [1293, 482, 9, 9, 150], [1263, 463, 7, 5, 50], [1377, 587, 9, 6, 150],
  [1365, 600, 10, 8, 120], [1230, 663, 5, 7, 200], [1210, 650, 4, 6, 60], [1247, 690, 6, 5, 80], [1200, 720, 8, 3, 60],
  [1225, 575, 12, 8, 90], [1100, 703, 24, 14, 160], [1030, 640, 30, 26, 130],
];

const fires: Pt[] = [];
const rnd = random(2024);
const gauss = () => Math.sqrt(-2 * Math.log(rnd() + 1e-9)) * Math.cos(6.2832 * rnd());

for (const [cx, cy, sx, sy, n] of hotspots) {
  for (let i = 0; i < n; i++) {
    const x = cx + gauss() * sx;
    const y = cy + gauss() * sy;
    if (inside(x, y)) fires.push([x, y]);
  }
}
const scatter = (n: number, x0: number, y0: number, x1: number, y1: number, spawn: number, weight: (x: number, y: number) => number) => {
  for (let i = 0; i < n; i++) {
    const x = x0 + rnd() * (x1 - x0);
    const y = y0 + rnd() * (y1 - y0);
    if (rnd() >= weight(x, y) || !inside(x, y)) continue;
    fires.push([x, y]);
    // Fires cluster: some start others close by.
    while (rnd() < spawn) {
      const nx = x + gauss() * 1.5;
      const ny = y + gauss() * 1.5;
      if (inside(nx, ny)) fires.push([nx, ny]);
    }
  }
};
scatter(2150, 550, 500, 960, 735, 0.12, (x, y) => (y < 565 && x < 870 ? 0.13 : y > 670 && x > 730 ? 0.2 : 0.8));
scatter(1650, 940, 510, 1150, 730, 0.15, (x, y) => (y < 590 ? (x < 1010 ? 0.5 : 0.04) : x < 975 && y > 650 ? 0.25 : 0.85));
scatter(470, 930, 360, 1210, 560, 0, () => 0.4);
scatter(14500, 1060, 410, 1400, 730, 0.46, (x, y) => {
  const edge = x - 1200 + (y - 500) * 0.9;
  const patch = Math.sin(x * 0.13 + y * 0.05) * Math.sin(y * 0.14 - x * 0.03);
  const hole = (cx: number, cy: number, r: number) => 1 - 0.75 * Math.exp(-((x - cx) ** 2 + (y - cy) ** 2) / (r * r));
  const holes = hole(1335, 562, 12) * hole(1270, 588, 13) * hole(1212, 530, 13) * hole(1240, 650, 9) * hole(1290, 680, 13);
  return Math.max(0, Math.min(1, (edge + 25) / 75)) * (0.72 + 0.3 * patch) * holes * (y < 500 ? 0.75 : 1) * (x > 1215 && y > 690 ? 0.6 : 1);
});

// Overlapping fires add up: each cell is coloured by how many fires touch it.
const ramp = ["#e2482c", "#fd7039", "#ffa551", "#ffd877", "#fff6ad", "#ffffff"];
const heat = new Map<number, number>();
for (const [x, y] of fires) {
  const px = Math.round(x - 1);
  const py = Math.round(y - 1);
  for (const k of [py * 2000 + px, py * 2000 + px + 1, (py + 1) * 2000 + px, (py + 1) * 2000 + px + 1]) {
    heat.set(k, (heat.get(k) ?? 0) + 1);
  }
}
const heatPaths = ramp.map(() => [] as string[]);
heat.forEach((n, k) => {
  heatPaths[Math.min(n, ramp.length) - 1].push(`M${k % 2000} ${Math.floor(k / 2000)}h1v1h-1z`);
});

const largeFires = [
  [710.5, 712, 2.3], [714.5, 724.5, 2.7], [1109.5, 654.5, 3], [1106.5, 719, 2.8], [999, 692, 2], [1024, 685.5, 2],
  [1108, 736, 1], [1123, 736, 1], [831, 701, 1.7], [751, 613, 1.7], [1057, 668, 1.7],
];

const KentuckyMap = () => (
  <svg width="1227" height="857" viewBox="356 155 1227 857">
    <path d={toPath(outline) + "Z"} fill="#6e6e6e" stroke="#6e6e6e" strokeWidth=".8" strokeLinejoin="round" />
    <path d="M537 724q4-3 8-1 3 3 2 8-3 4-7 2-5-3-3-9z" fill="#6e6e6e" />
    <path d={linePath} fill="none" stroke="#3d3d3d" strokeWidth=".85" />
    {heatPaths.map((d, i) => (
      <path key={ramp[i]} d={d.join("")} fill={ramp[i]} shapeRendering="crispEdges" />
    ))}
    {largeFires.map(([x, y, r]) => (
      <circle key={`${x}-${y}`} cx={x} cy={y} r={r} fill="#ef3b20" />
    ))}
  </svg>
);

/* -------------------------------------------------------------- structure */

type Tool = string;

// "+" marks a drop-down, "-" a disabled drop-down and "*" the current tool.
const rows: Tool[][][] = [
  [
    ["newFile", "open", "save", "saveAs", "layout", "layoutManager", "style"],
    ["pan*", "panSelection", "zoomIn", "zoomOut", "zoomNative", "zoomFull", "zoomSelection", "zoomLayer", "zoomLast", "zoomNext", "newView", "newBookmark", "bookmarks", "refresh"],
    ["identify", "action-", "select+", "selectExpr+", "deselect", "table", "abacus", "gear", "sigma", "ruler+", "mapTip", "annotation+"],
  ],
  [
    ["dataSource", "newGeo", "newShape", "newSpatialite", "newMemory"],
    ["edits", "edit", "saveEdits", "addPolygon", "vertex-", "modify", "trash", "cut", "copy", "paste", "undo", "redo"],
    ["label", "diagram", "pinned", "pin", "showLabel", "moveLabel", "rotateLabel", "changeLabel"],
    ["metasearch"],
    ["python", "hexagon", "leaf", "addLayers+"],
    ["help"],
    [],
  ],
  [[], ["pointer"], ["osmGreen", "osmEdit"], ["hammer", "scroll"]],
];

const Toolbars = () => (
  <>
    {rows.map((groups, r) => (
      <ToolbarRow key={r}>
        {groups.map((tools, g) => (
          <ToolbarGroup key={g} $last={g === groups.length - 1}>
            <Handle />
            {tools.map((tool) => {
              const name = tool.replace(/[-+*]/, "");
              const menu = /[-+]/.test(tool);
              return (
                <ToolButton key={name} $menu={menu} $active={tool.endsWith("*")}>
                  <Icon>{icons[name]}</Icon>
                  {menu && <Caret $dim={tool.endsWith("-")} />}
                </ToolButton>
              );
            })}
          </ToolbarGroup>
        ))}
      </ToolbarRow>
    ))}
  </>
);

const menus: [string, number, number][] = [
  ["Project", 3, 53], ["Edit", 0, 36], ["View", 0, 41], ["Layer", 0, 44], ["Settings", 0, 58], ["Plugins", 0, 55], ["Vector", 4, 49],
  ["Raster", 0, 48], ["Database", 0, 64], ["Web", 0, 40], ["MMQGIS", -1, 64], ["Processing", 3, 73], ["Help", 0, 41],
];

const MenuLabel = ({ text, at }: { text: string; at: number }) =>
  at < 0 ? (
    <>{text}</>
  ) : (
    <>
      {text.slice(0, at)}
      <u>{text[at]}</u>
      {text.slice(at + 1)}
    </>
  );

const Chevron = ({ open }: { open?: boolean }) => (
  <svg width="10" height="10" viewBox="0 0 10 10" fill="none">
    {open ? <path d="M1 3l4 4 4-4" stroke="#404040" strokeWidth="1.800" /> : <path d="M3 1l4 4-4 4" stroke="#a0a0a0" strokeWidth="1.700" />}
  </svg>
);

const Check = () => (
  <CheckBox>
    <svg width="11" height="11" viewBox="0 0 11 11" fill="none">
      <path d="M1.500 5.500l2.700 2.700L9.700 2.300" stroke="#333" strokeWidth="1.200" />
    </svg>
  </CheckBox>
);

type Node = { name: string; level: number; icon: string; state?: "open" | "closed"; selected?: boolean };

const browserNodes: Node[] = [
  { name: "SpatiaLite", level: 0, icon: "spatialite", state: "closed" },
  { name: "PostGIS", level: 0, icon: "postgis", state: "open" },
  { name: "gisdb", level: 1, icon: "conn", state: "closed" },
  { name: "historic_tornado_analysis", level: 1, icon: "conn", state: "closed" },
  { name: "map671", level: 1, icon: "conn", state: "closed" },
  { name: "qgis_db", level: 1, icon: "conn", state: "open" },
  { name: "ky", level: 2, icon: "schema", state: "open" },
  { name: "counties", level: 3, icon: "polygon", selected: true },
  { name: "state", level: 3, icon: "polygon", selected: true },
  { name: "wildfires", level: 3, icon: "points", selected: true },
  { name: "module_04", level: 2, icon: "schema", state: "closed" },
  { name: "public", level: 2, icon: "schema", state: "closed" },
  { name: "test", level: 2, icon: "schema" },
  { name: "richland", level: 1, icon: "conn", state: "closed" },
  { name: "MSSQL", level: 0, icon: "mssql", state: "closed" },
  { name: "Oracle", level: 0, icon: "oracle", state: "closed" },
];

const classes: [string, number][] = [
  ["0 - 135", 2], ["135 - 650", 4], ["650 - 1800", 5], ["1800 - 4070", 6.5], ["4070 - 10000", 8],
];

const DockHeader = ({ title }: { title: string }) => (
  <DockTitle>
    <span>{title}</span>
    <svg width="9" height="9" viewBox="0 0 9 9" fill="none" stroke="#222">
      <path d="M2.500 3V.7h6v4.800H6.500M.5 3.500h6v5h-6zM2.500 1.200h6M.5 4h6" />
    </svg>
    <svg width="9" height="9" viewBox="0 0 9 9" fill="none" stroke="#333" strokeWidth="1.900">
      <path d="M1 1l7 7M8 1L1 8" />
    </svg>
  </DockTitle>
);

const BrowserDock = () => (
  <Dock $h={355}>
    <DockHeader title="Browser" />
    <DockTools>
      {["addSelected", "refresh", "filter", "collapse", "info"].map((n) => (
        <Icon key={n} size={16}>{icons[n]}</Icon>
      ))}
    </DockTools>
    <TreeFrame>
      <TreeBody>
        {browserNodes.map((n) => (
          <TreeRow key={n.name} $level={n.level}>
            <Expander>{n.state && <Chevron open={n.state === "open"} />}</Expander>
            <NodeCell $selected={n.selected}>
              <Icon size={16}>{nodeIcons[n.icon]}</Icon>
              {n.name}
            </NodeCell>
          </TreeRow>
        ))}
      </TreeBody>
      <ScrollBar>
        <svg width="10" height="8" viewBox="0 0 10 8" fill="none"><path d="M1.500 6L5 2.500 8.500 6" stroke="#505050" strokeWidth="1.700" /></svg>
        <ScrollThumb />
        <svg width="10" height="8" viewBox="0 0 10 8" fill="none"><path d="M1.500 2L5 5.500 8.500 2" stroke="#505050" strokeWidth="1.700" /></svg>
      </ScrollBar>
    </TreeFrame>
  </Dock>
);

const LayersGap = styled.div`
  height: 6px;
  flex: none;
`;

const CaretGap = styled.div`
  width: 12px;
  padding-left: 1px;
  margin: 0 -3px 0 -2px;
`;

const LayersDock = () => (
  <Dock>
    <DockHeader title="Layers" />
    <DockTools>
      {["brush", "addGroup", "eye", "filter", "filterExpr"].map((n) => (
        <Icon key={n} size={16}>{icons[n]}</Icon>
      ))}
      <CaretGap><Caret as="div" /></CaretGap>
      {["expand", "collapse", "remove"].map((n) => (
        <Icon key={n} size={16}>{icons[n]}</Icon>
      ))}
    </DockTools>
    <TreeFrame>
      <TreeBody>
        <LayerRoot>
          <Expander><Chevron open /></Expander>
          <LayerRow $h={20} $indent={0} $bold>
            <Check />
            <SymbolCell $w={28}>
              <svg width="16" height="16" viewBox="0 0 24 24" fill="#fff" stroke="#999" strokeWidth="1.400">
                <circle cx="20" cy="3" r="1.600" /><circle cx="10" cy="8" r="1.600" /><circle cx="6" cy="18" r="1.600" />
              </svg>
            </SymbolCell>
            wildfires
          </LayerRow>
        </LayerRoot>
        {classes.map(([label, d]) => (
          <LayerRow key={label} $h={24} $indent={1}>
            <Check />
            <SymbolCell $w={32} $gap={3}><Dot $d={d} /></SymbolCell>
            {label}
          </LayerRow>
        ))}
        <LayerRow $h={20} $indent={0} $selected $bold>
          <Check />
          <Swatch $fill="#d9d9d9" $line="#c2c5c8" />
          counties
        </LayerRow>
        <LayerRow $h={20} $indent={0} $bold>
          <Check />
          <Swatch $fill="#6e6e6e" $line="#6e6e6e" />
          state
        </LayerRow>
      </TreeBody>
    </TreeFrame>
  </Dock>
);

const Status = () => (
  <StatusBar>
    <Locator $w={200} $pad={8}>
      <svg width="13" height="13" viewBox="0 0 13 13" fill="none" stroke="#858585" strokeWidth="1.300">
        <circle cx="5" cy="5" r="4.200" /><path d="M8 8l4.500 4.500" />
      </svg>
      <span>Type to locate (Ctrl+K)</span>
    </Locator>
    <Message>6 legend entries removed.</Message>
    <Label $w={40}>Coordinate</Label>
    <Field $w={75} $pad={6}><span>3645186,4764879</span></Field>
    <StatusIcon $w={22}>
      <Icon size={16}>
        <path d="M2 4q4-4 8 0l8 10q4 5 1 8-4 2-8-2L2 10q-2-4 0-6z" fill="#eee" stroke="#333" strokeWidth="1.800" />
        <path d="M2 8l8-4M5 12l8-4M8 16l8-4" stroke="#222" strokeWidth="2" />
        <circle cx="16" cy="18" r="2.500" stroke="#333" strokeWidth="1.500" />
        <path d="M22 3l-5 6M2 20l4-4" stroke="#222" strokeWidth="1.600" />
      </Icon>
    </StatusIcon>
    <StatusIcon $w={10} />
    <Label $w={21}>Scale</Label>
    <Field $w={78} $pad={4}>
      <span>1:2959704</span>
      <svg width="14" height="9" viewBox="0 0 14 9" fill="none"><path d="M2.500 2L7 6.500 11.500 2" stroke="#444" /></svg>
    </Field>
    <StatusIcon $w={32}>
      <Icon size={16}>
        <path d="M7 11V7q0-5 5-5t5 5v4" stroke="#777" strokeWidth="2.500" />
        <rect x="4" y="10" width="16" height="13" rx="1.500" fill="#555" />
      </Icon>
    </StatusIcon>
    <Label $w={35}>Magnifier</Label>
    <Field $w={82}><span>100%</span><Spin><i /><i /></Spin></Field>
    <StatusIcon $w={9} />
    <Label $w={38}>Rotation</Label>
    <Field $w={80}><span>0.0 °</span><Spin><i /><i /></Spin></Field>
    <StatusIcon $w={6} />
    <Check />
    <StatusIcon $w={5} />
    <Label $w={40}>Render</Label>
    <StatusIcon $w={18}>
      <Icon size={15}>
        <circle cx="12" cy="12" r="10" fill="#b5b5b5" stroke="#888" strokeWidth="1.500" />
        <path d="M2 12h20M12 2v20M4 7h16M4 17h16M12 2q-9 10 0 20M12 2q9 10 0 20" stroke="#777" strokeWidth="1.300" />
      </Icon>
    </StatusIcon>
    <StatusIcon $w={3} />
    <Label $w={51}>EPSG:3089</Label>
    <Icon size={18}>
      <path d="M12 2c6 0 10 3.500 10 8.500S18 19 13 19l-1 4-3-4.500C4.500 18 2 15 2 10.500 2 5.500 6 2 12 2z" fill="#4a4a4a" />
      <path d="M6 9.500h3v2.500H6zM10.500 9.500h3v2.500h-3zM15 9.500h3v2.500h-3z" fill="#fff" />
    </Icon>
    <StatusIcon $w={23}>
      <svg width="8" height="8" viewBox="0 0 8 8" fill="#b5b5b5">
        <path d="M6 0h2v2H6zM6 3h2v2H6zM6 6h2v2H6zM3 3h2v2H3zM3 6h2v2H3zM0 6h2v2H0z" />
      </svg>
    </StatusIcon>
  </StatusBar>
);

export default function App() {
  return (
    <Window>
      <GlobalStyle />
      <TitleBar>
        <Icon size={16}>
          <circle cx="11.500" cy="11.500" r="8.800" stroke="#589632" strokeWidth="5" />
          <path d="M12 12l3.500-.5 7.500 8v3.500h-4L11.500 15z" fill="#93b023" />
          <path d="M10 10h5v5h-2z" fill="#ee7913" />
        </Icon>
        <TitleText>*Untitled Project - QGIS</TitleText>
        <WindowButton><svg width="11" height="11" stroke="#111" fill="none"><path d="M0 5.500h11" /></svg></WindowButton>
        <WindowButton><svg width="11" height="11" stroke="#111" fill="none"><path d="M.5.5h10v10H.5z" /></svg></WindowButton>
        <WindowButton><svg width="11" height="11" stroke="#111" fill="none"><path d="M.5.5l10 10M10.500.5l-10 10" /></svg></WindowButton>
      </TitleBar>
      <MenuBar>
        {menus.map(([text, at, w]) => (
          <MenuItem key={text} $w={w}><MenuLabel text={text} at={at} /></MenuItem>
        ))}
      </MenuBar>
      <Toolbars />
      <Workspace>
        <Docks>
          <BrowserDock />
          <LayersGap />
          <LayersDock />
        </Docks>
        <MapFrame><KentuckyMap /></MapFrame>
      </Workspace>
      <Status />
    </Window>
  );
}
